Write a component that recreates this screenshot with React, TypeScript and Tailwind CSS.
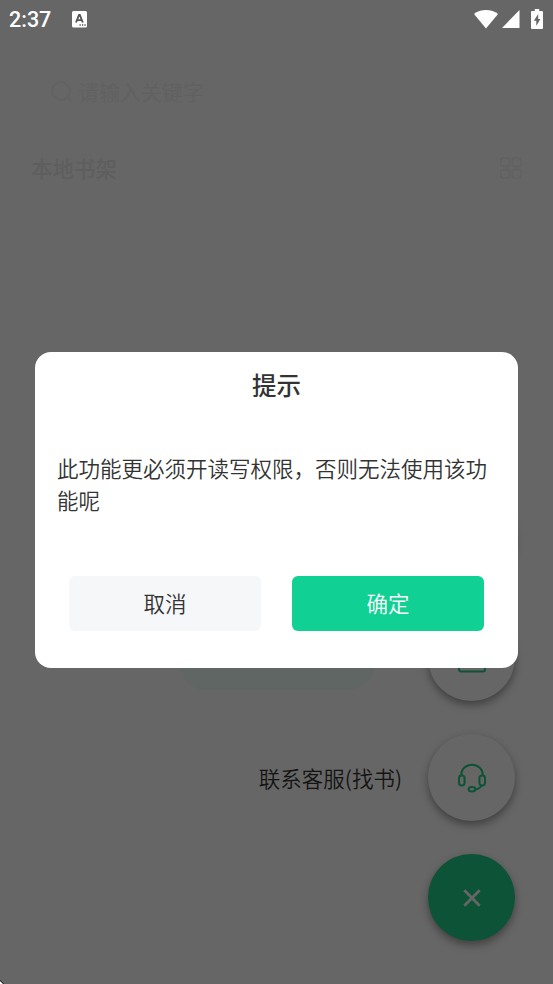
import React from "react";

const fabs = [
  { id: "add", label: "", icon: "card" },
  { id: "import", label: "", icon: "card" },
  { id: "service", label: "联系客服(找书)", icon: "headset" },
  { id: "close", label: "", icon: "close" },
];

function StatusBar() {
  return (
    <div className="flex h-[38px] items-center justify-between pl-[9px] pr-[9px] text-white">
      <div className="flex items-center">
        <span className="w-[63px] pt-px font-['Roboto',sans-serif] text-[21.5px] leading-[38px] font-medium">2:37</span>
        <svg width="15" height="17" viewBox="0 0 15 17">
          <rect width="15" height="16.5" rx="1.5" fill="#fff" />
          <path d="M4 11.5 7 4h.8l3 7.5M5.4 9.1h4.2" fill="none" stroke="#555" strokeWidth="1.9" />
          <path d="M7.5 14h1.3M10 14h1.3M12.4 14h1.3" stroke="#555" strokeWidth="1.3" />
        </svg>
      </div>
      <div className="flex items-center">
        <svg width="24" height="19" viewBox="0 0 24 19">
          <path d="M0 4C6-1.2 18-1.2 24 4L12 18.5Z" fill="#fff" />
        </svg>
        <svg className="ml-[4px]" width="18" height="18" viewBox="0 0 18 18">
          <path d="M17.5 0v18H0Z" fill="#fff" />
        </svg>
        <svg className="mr-[1px] ml-[11px]" width="12" height="20" viewBox="0 0 12 20">
          <path d="M3.8 0h4.4v2H11q1 0 1 1v16q0 1-1 1H1q-1 0-1-1V3q0-1 1-1h2.8Z" fill="#fff" />
          <path d="M7.2 5 2.8 11.8h2.5V17l4.1-7H7.2Z" fill="#666" />
        </svg>
      </div>
    </div>
  );
}

function FabIcon({ name }: { name: string }) {
  if (name === "headset") {
    return (
      <svg width="30" height="30" viewBox="0 0 30 30" fill="none" stroke="#0c5338" strokeWidth="2">
        <path d="M4.3 12.5v-1a10.7 9.8 0 0 1 21.4 0v1" />
        <rect x="2" y="12.4" width="5.6" height="10" rx="2.6" />
        <rect x="22.4" y="12.4" width="5.6" height="10" rx="2.6" />
        <ellipse cx="15" cy="26.3" rx="3.4" ry="2.3" />
        <path d="M18.4 26.4c3-.5 5.2-1.8 6-3.8" />
      </svg>
    );
  }
  if (name === "close") {
    return (
      <svg width="18" height="18" viewBox="0 0 18 18" fill="none" stroke="#666" strokeWidth="2.8">
        <path d="m1.3 1.3 15.4 15.4M16.7 1.3 1.3 16.7" />
      </svg>
    );
  }
  return (
    <svg width="28" height="30" viewBox="0 0 28 30" fill="none" stroke="#0c5338" strokeWidth="1.9">
      <rect x="1" y="1" width="26" height="27.5" rx="2" />
    </svg>
  );
}

export default function App() {
  return (
    <div className="relative h-[984px] w-full overflow-hidden bg-[#666] font-['Noto_Sans_CJK_SC',sans-serif]">
      <StatusBar />

      <div className="mt-[38px] ml-[51px] flex h-8 items-center text-[21px] text-[#616161]">
        <svg className="mr-[5px]" width="22" height="22" viewBox="0 0 22 22" fill="none" stroke="#626262" strokeWidth="1.8">
          <circle cx="10" cy="10" r="8.8" />
          <path d="m16.5 16.5 4.5 4.5" />
        </svg>
        请输入关键字
      </div>
      <div className="mt-[44px] flex h-8 items-center justify-between pr-[31px] pl-[31px]">
        <h1 className="text-[21.5px] font-medium text-[#5e5e5e]">本地书架</h1>
        <svg width="22" height="22" viewBox="0 0 22 22" fill="none" stroke="#616161" strokeWidth="1.5">
          <rect x="1" y="1" width="8.5" height="8.5" rx="2" />
          <rect x="12.5" y="1" width="8.5" height="8.5" rx="2" />
          <rect x="1" y="12.5" width="8.5" height="8.5" rx="2" />
          <rect x="12.5" y="12.5" width="8.5" height="8.5" rx="2" />
        </svg>
      </div>
      <div className="mx-auto mt-[451px] h-[55px] w-[196px] rounded-full bg-[#606663]" />

      {/* floating actions */}
      <div className="absolute right-[38px] bottom-[43px] flex flex-col items-end gap-[33px]">
        {fabs.map((f) => (
          <div key={f.id} className="flex items-center gap-[26px]">
            {f.label && <span className="text-[21.5px] leading-8 font-[350] text-[#141414]">{f.label}</span>}
            <button
              className={
                f.icon === "close"
                  ? "flex size-[87px] items-center justify-center rounded-full bg-[#0c5338] shadow-[0_4px_9px_rgba(0,0,0,0.38)]"
                  : "flex size-[87px] items-center justify-center rounded-full bg-[#666] shadow-[0_4px_9px_rgba(0,0,0,0.38)]"
              }
            >
              <FabIcon name={f.icon} />
            </button>
          </div>
        ))}
      </div>

      {/* permission dialog */}
      <div className="absolute top-[352px] left-[35px] h-[316px] w-[483px] rounded-[16px] bg-white text-[#333]">
        <h2 className="pt-[17px] text-center text-[24.5px] leading-8 font-medium">提示</h2>
        <p className="mt-[51px] h-16 px-[22px] text-[21.5px] leading-8 font-[350]">此功能更必须开读写权限，否则无法使用该功能呢</p>
        <div className="mt-[60px] flex justify-between px-[34px] text-[21.5px] font-[350]">
          <button className="h-[55px] w-[192px] rounded-[6px] bg-[#f6f7f9]">取消</button>
          <button className="h-[55px] w-[192px] rounded-[6px] bg-[#10d093] text-white">确定</button>
        </div>
      </div>

      <svg className="absolute bottom-0 left-0" width="4" height="4" viewBox="0 0 4 4">
        <path d="M0 0 4 4H0Z" fill="#000" />
        <path d="M0 1 3 4H0Z" fill="#fff" />
      </svg>
    </div>
  );
}
